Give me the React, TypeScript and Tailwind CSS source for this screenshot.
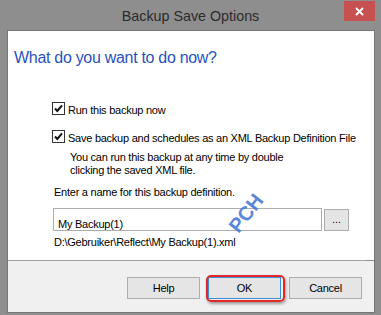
import React from "react";

function CheckBox() {
  return (
    <svg width="13" height="13" viewBox="0 0 13 13" className="shrink-0">
      <rect x="0.5" y="0.5" width="12" height="12" fill="#fff" stroke="#333" />
      <path d="M3 6.5 L5.3 9 L10 3.3" fill="none" stroke="#111" strokeWidth="2" />
    </svg>
  );
}

export default function App() {
  const txt = "text-[11px] leading-[13px] tracking-[-0.25px] text-black";
  return (
    <div
      className="w-[381px] h-[315px] bg-[#8e8e8e] flex flex-col pl-[7px] pr-[6px] pb-[2px] overflow-hidden"
      style={{ fontFamily: '"Liberation Sans", Arial, sans-serif' }}
    >
      {/* Title bar */}
      <div className="relative h-[30px] shrink-0 -ml-[7px] -mr-[6px] flex items-center justify-center pt-[2px]">
        <span className="text-[14.3px] leading-[17px] text-[#2b2b2b]">Backup Save Options</span>
        <div className="absolute right-[6px] top-[1px] w-[31px] h-[20px] bg-[#c75050] flex items-center justify-center">
          <svg width="9" height="9" viewBox="0 0 9 9">
            <path d="M1 1 L8 8 M8 1 L1 8" stroke="#fff" strokeWidth="1.8" />
          </svg>
        </div>
      </div>

      {/* Client area */}
      <div className="flex-1 border border-[#767676] flex flex-col">
        <div className="relative h-[229px] bg-white flex flex-col">
          <div className="mt-[17px] pl-[6px] text-[16px] leading-[20px] tracking-[-0.3px] text-[#2a52be]">
            What do you want to do now?
          </div>

          <div className="mt-[34px] ml-[44px] flex items-start gap-[3px] h-[13px]">
            <CheckBox />
            <span className={`${txt} mt-[2px]`}>Run this backup now</span>
          </div>

          <div className="mt-[15px] ml-[44px] flex items-start gap-[3px] h-[13px]">
            <CheckBox />
            <span className={`${txt} mt-[2px] whitespace-nowrap`}>
              Save backup and schedules as an XML Backup Definition File
            </span>
          </div>

          <div className={`${txt} mt-[8px] ml-[62px]`}>
            <div>You can run this backup at any time by double</div>
            <div>clicking the saved XML file.</div>
          </div>

          <div className={`${txt} mt-[9px] ml-[46px]`}>Enter a name for this backup definition.</div>

          <div className="mt-[9px] ml-[45px] flex items-center gap-[2px]">
            <div className="w-[269px] h-[23px] border border-[#abadb3] bg-white pl-[4px] pt-[2px]">
              <span className={txt}>My Backup(1)</span>
            </div>
            <div className="w-[25px] h-[22px] border border-[#adadad] bg-[#e5e5e5] flex items-center justify-center">
              <span className={`${txt} tracking-[0px]`}>...</span>
            </div>
          </div>

          <div className={`${txt} mt-[5px] ml-[46px]`}>D:\Gebruiker\Reflect\My Backup(1).xml</div>

          <div className="absolute left-[218px] top-[170px] w-[40px] h-[24px] flex items-center justify-center rotate-[-52deg] pointer-events-none">
            <span className="text-[20px] leading-[24px] font-bold text-[#4a7ad8] opacity-90">PCH</span>
          </div>
        </div>

        <div className="h-[1px] bg-[#a0a0a0] mr-[8px]" />

        <div className="flex-1 bg-[#f0f0f0] flex justify-end items-start pt-[16px] pr-[12px] gap-[8px]">
          <div className="w-[73px] h-[22px] border border-[#adadad] bg-[#e5e5e5] flex items-center justify-center">
            <span className={txt}>Help</span>
          </div>
          <div className="relative w-[73px] h-[22px]">
            <div className="w-full h-full border border-[#3c8fd8] bg-[#e5e5e5] flex items-center justify-center">
              <span className={txt}>OK</span>
            </div>
            <div className="absolute -left-[2px] -top-[2px] w-[79px] h-[27px] border-2 border-[#e02828] rounded-[5px] shadow-[1px_2px_3px_rgba(0,0,0,0.35)]" />
          </div>
          <div className="w-[73px] h-[22px] border border-[#adadad] bg-[#e5e5e5] flex items-center justify-center">
            <span className={txt}>Cancel</span>
          </div>
        </div>
      </div>
    </div>
  );
}
